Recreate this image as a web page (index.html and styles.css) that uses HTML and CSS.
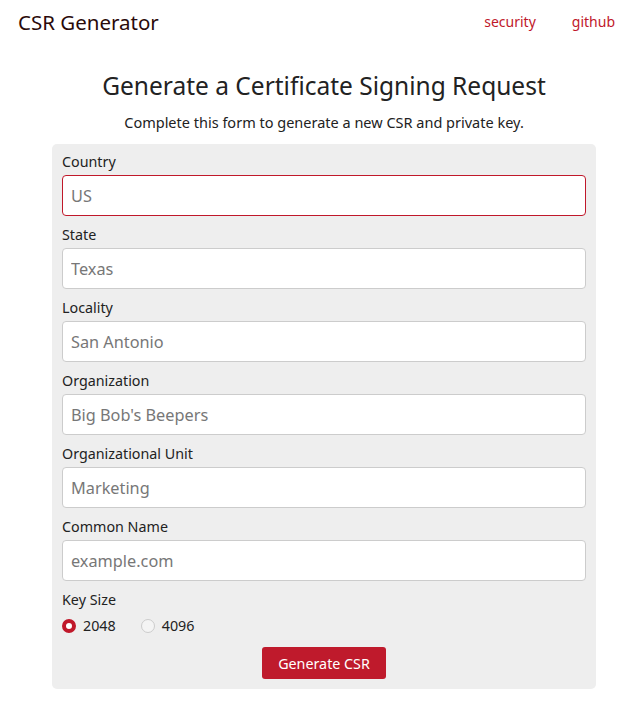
FILE: index.html
```html
<!DOCTYPE html>
<html>
<head>
<meta charset="utf-8">
<link rel="stylesheet" href="styles.css">
</head>
<body>
<header class="topbar">
  <div class="brand">CSR Generator</div>
  <nav class="links">
    <a href="#">security</a>
    <a href="#">github</a>
  </nav>
</header>
<main class="main">
  <h1 class="title">Generate a Certificate Signing Request</h1>
  <p class="subtitle">Complete this form to generate a new CSR and private key.</p>
  <form class="panel">
    <div class="field">
      <label class="label">Country</label>
      <input class="input input-focus" placeholder="US" autofocus>
    </div>
    <div class="field">
      <label class="label">State</label>
      <input class="input" placeholder="Texas">
    </div>
    <div class="field">
      <label class="label">Locality</label>
      <input class="input" placeholder="San Antonio">
    </div>
    <div class="field">
      <label class="label">Organization</label>
      <input class="input" placeholder="Big Bob's Beepers">
    </div>
    <div class="field">
      <label class="label">Organizational Unit</label>
      <input class="input" placeholder="Marketing">
    </div>
    <div class="field">
      <label class="label">Common Name</label>
      <input class="input" placeholder="example.com">
    </div>
    <div class="keysize">
      <div class="label">Key Size</div>
      <div class="radios">
        <label class="radio"><span class="dot dot-on"></span>2048</label>
        <label class="radio"><span class="dot"></span>4096</label>
      </div>
    </div>
    <div class="actions">
      <button type="button" class="btn">Generate CSR</button>
    </div>
  </form>
</main>
</body>
</html>
```
FILE: styles.css
```css
* { box-sizing: border-box; }
body {
  margin: 0;
  font-family: "Noto Sans", "Open Sans", sans-serif;
  color: #222;
  background: #fff;
}
.topbar {
  display: flex;
  justify-content: space-between;
  align-items: center;
  padding: 0 26px 0 18px;
  height: 44px;
}
.brand {
  font-size: 20.5px;
  color: #2a0a0a;
}
.links {
  display: flex;
  gap: 36px;
  margin-top: -1px;
}
.links a {
  color: #c0182a;
  text-decoration: none;
  font-size: 14px;
}
.main {
  display: flex;
  flex-direction: column;
  align-items: center;
  padding-left: 7px;
}
.title {
  font-weight: 400;
  font-size: 24.5px;
  margin: 25px 0 0;
  color: #222;
}
.subtitle {
  font-size: 14.5px;
  margin: 10px 0 0;
  color: #222;
}
.panel {
  width: 544px;
  margin-top: 12px;
  background: #eee;
  border-radius: 5px;
  padding: 8px 10px 10px;
}
.field {
  margin-bottom: 9px;
}
.label {
  display: block;
  font-size: 14.3px;
  color: #222;
  line-height: 20px;
  margin-bottom: 3px;
}
.input {
  display: block;
  width: 100%;
  height: 41px;
  border: 1px solid #ccc;
  border-radius: 4px;
  background: #fff;
  padding: 0 8px;
  font-family: inherit;
  font-size: 16.3px;
  color: #333;
  outline: none;
}
.input::placeholder { color: #777; }
.input-focus { border-color: #c0182a; }
.keysize { margin-top: 2px; }
.radios {
  display: flex;
  gap: 25px;
  margin-top: 6px;
}
.radio {
  display: flex;
  align-items: center;
  gap: 7px;
  font-size: 14.3px;
  color: #222;
}
.dot {
  width: 14px;
  height: 14px;
  border-radius: 50%;
  border: 1px solid #ccc;
  background: #f4f4f4;
}
.dot-on {
  background: #fff;
  border: 4px solid #c0182a;
}
.actions {
  display: flex;
  justify-content: center;
  margin-top: 12px;
}
.btn {
  background: #bf1a2c;
  color: #fff;
  border: none;
  border-radius: 3px;
  font-family: inherit;
  font-size: 14.3px;
  width: 124px;
  height: 32px;
}
```
